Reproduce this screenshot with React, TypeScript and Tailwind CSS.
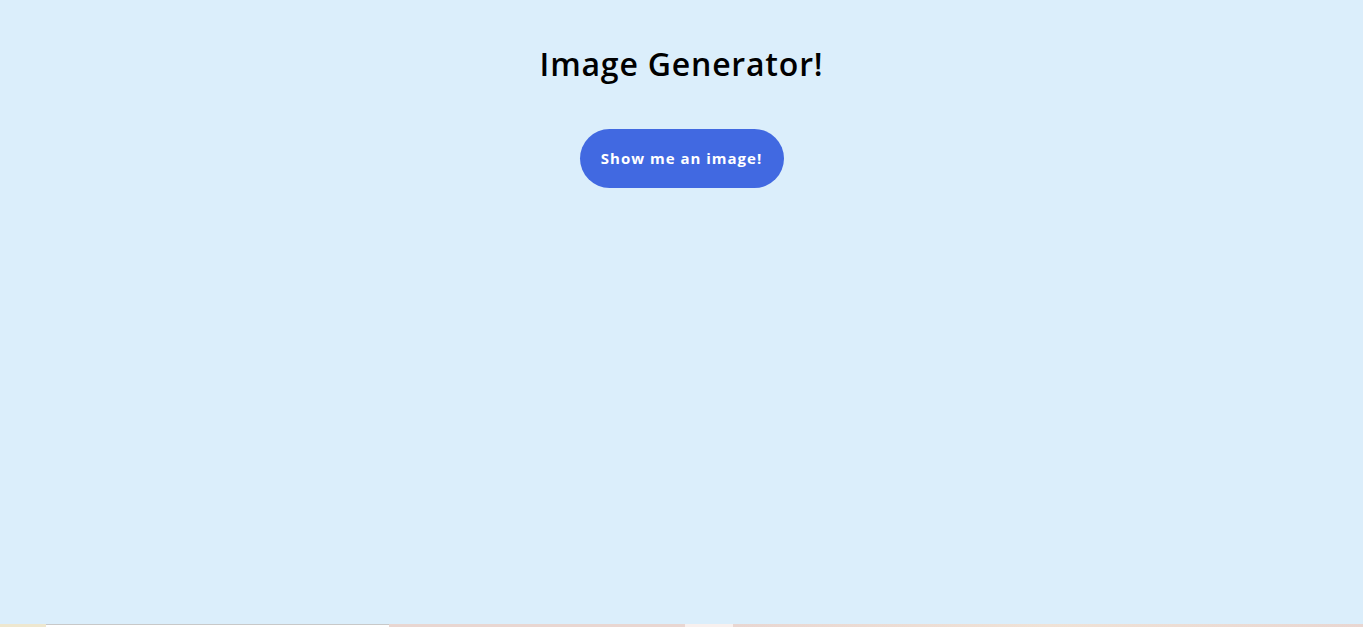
export default function App() {
  return (
    <div
      className="flex h-[627px] flex-col bg-[#dbeefb] text-black"
      style={{ fontFamily: '"Open Sans", "DejaVu Sans", sans-serif' }}
    >
      <main className="flex flex-1 flex-col items-center pt-[44px]">
        <h1 className="text-[32px] font-semibold leading-[40px] tracking-[0.8px]">Image Generator!</h1>
        <button className="mt-[45px] h-[59px] w-[204px] rounded-full bg-[#4169e1] text-[15px] font-bold tracking-[1px] text-white">
          Show me an image!
        </button>
      </main>

      {/* strip of whatever sits under the page */}
      <div className="flex h-[3px]">
        <div className="w-[46px] bg-[#eee7cf]" />
        <div className="w-[343px] border-t border-[#c8c8c8] bg-white" />
        <div className="w-[296px] bg-[#e9d6d1]" />
        <div className="w-[48px] bg-[#f8f0ee]" />
        <div className="flex-1 bg-gradient-to-r from-[#e9d6d1] via-[#f0e2d6] to-[#e9d6d1]" />
      </div>
    </div>
  )
}
